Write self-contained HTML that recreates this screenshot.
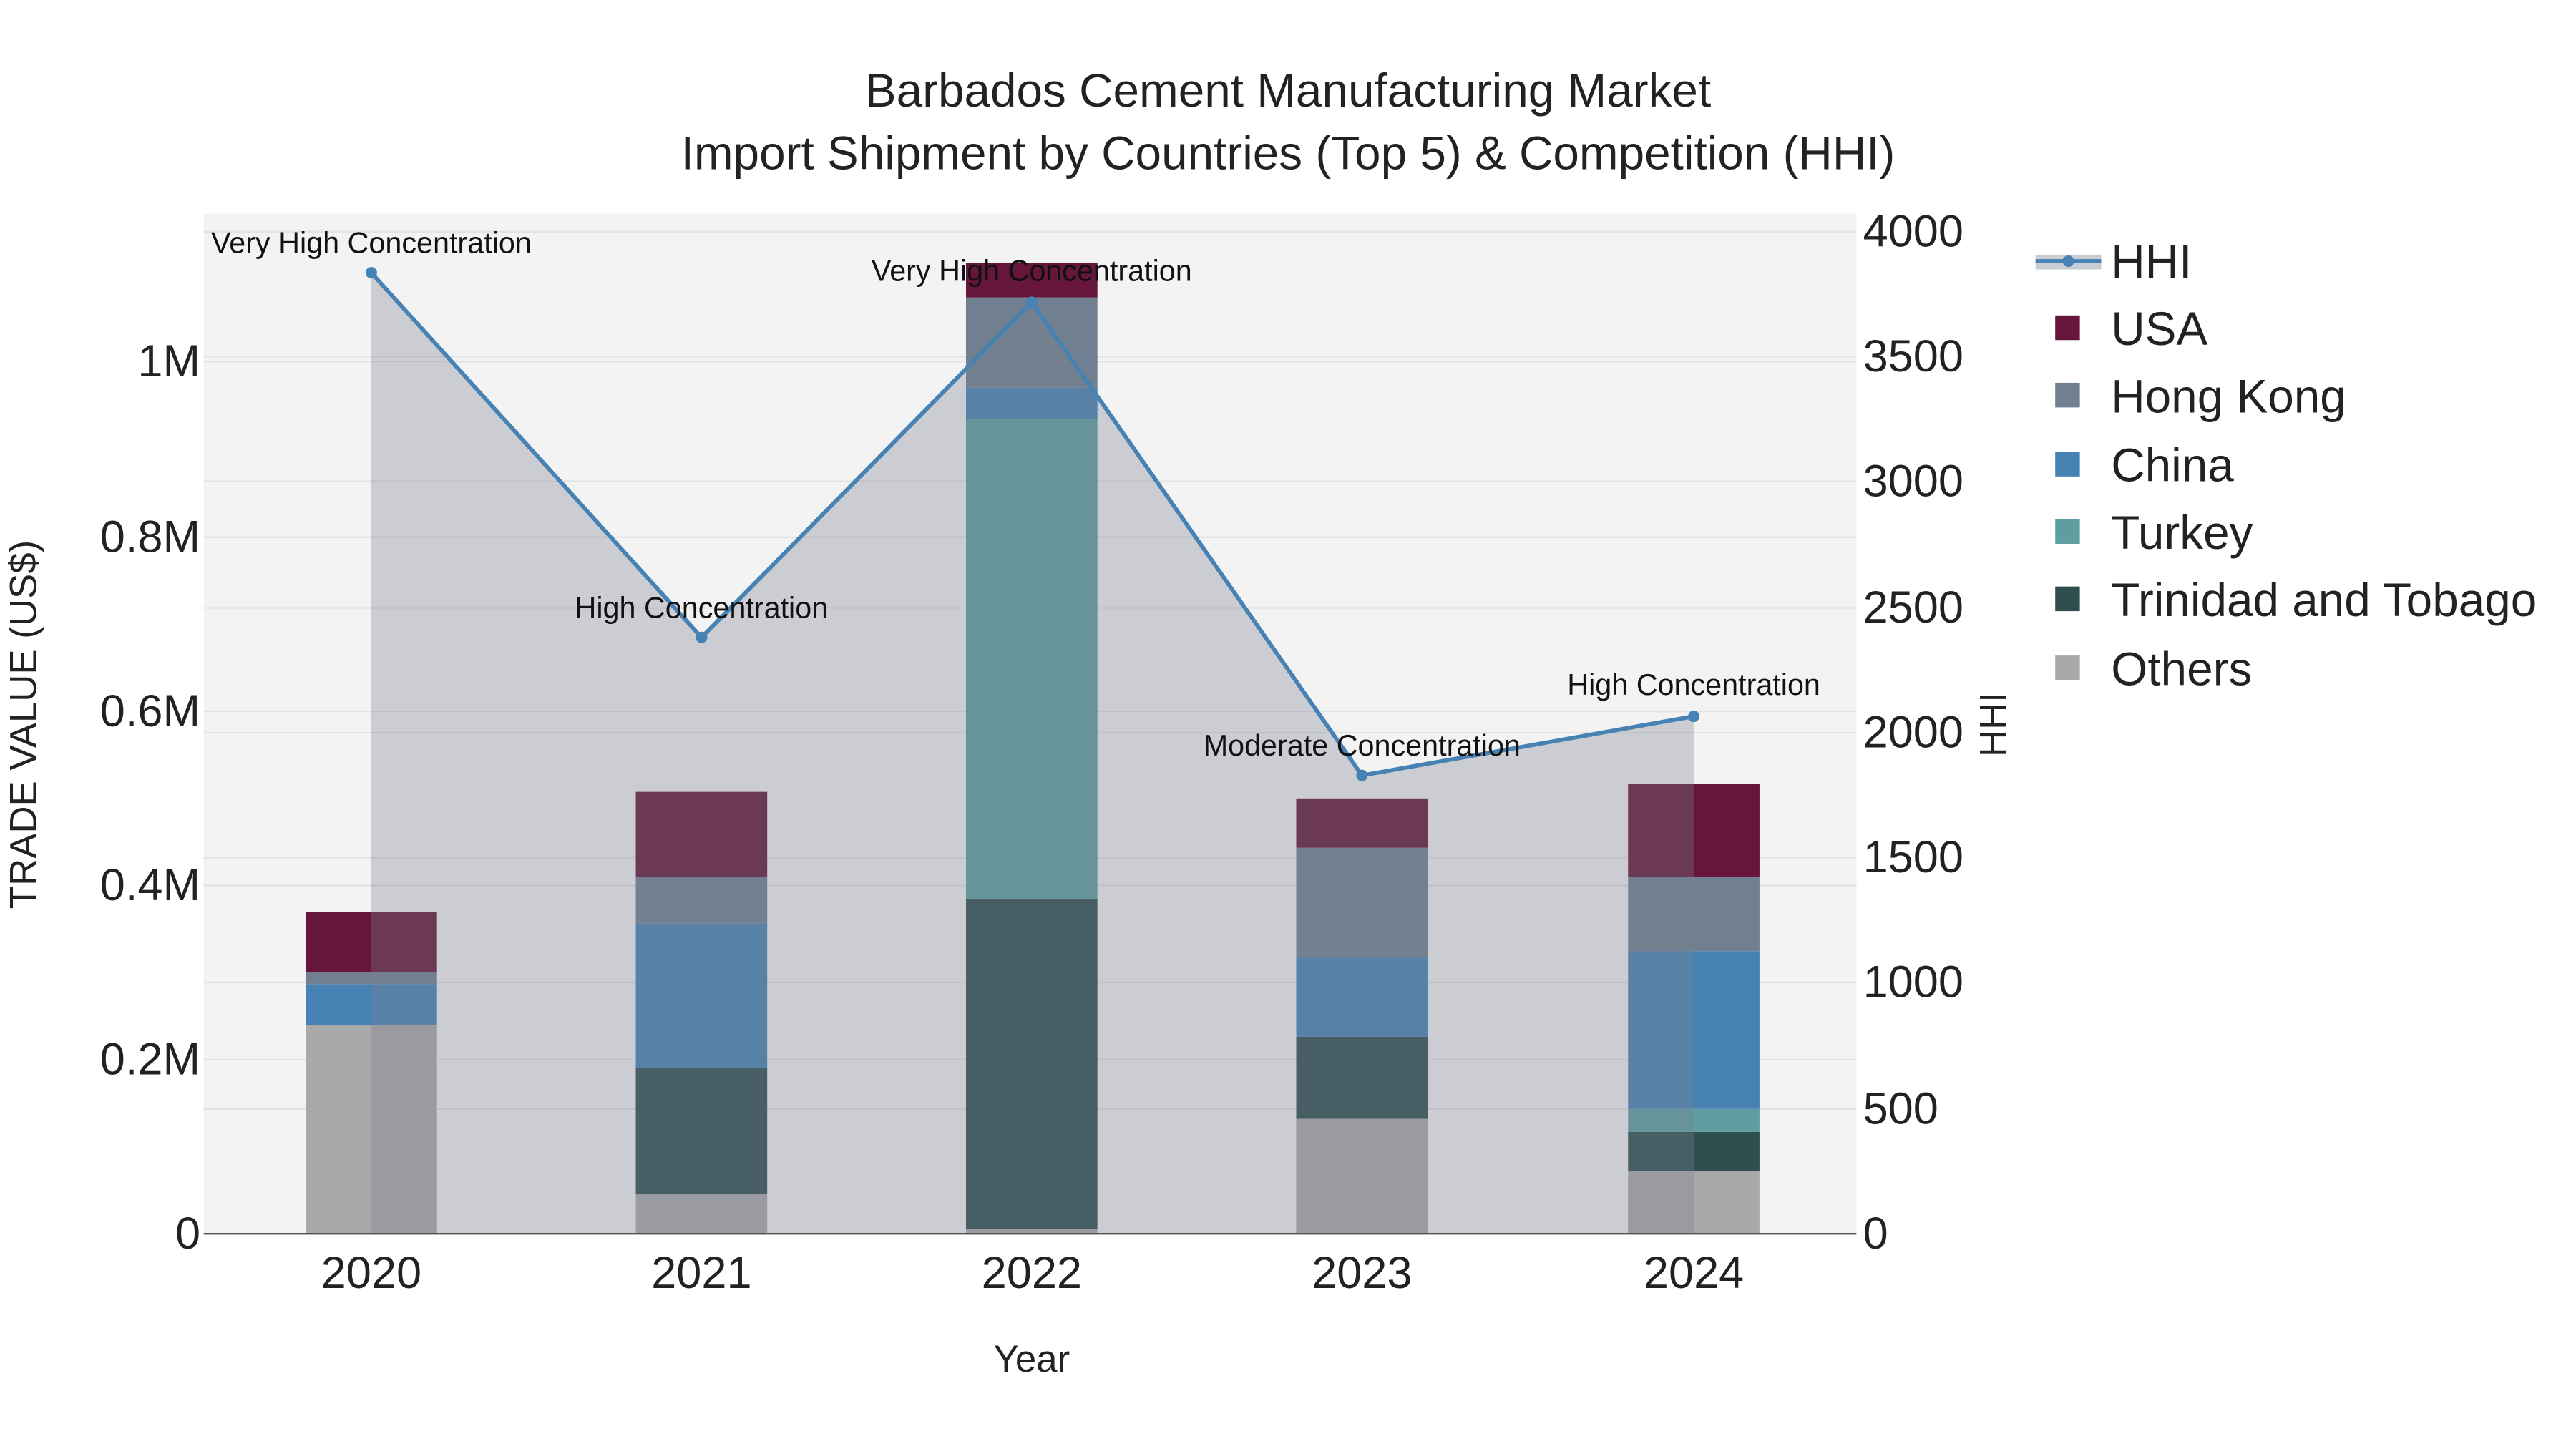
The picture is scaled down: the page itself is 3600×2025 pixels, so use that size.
<!DOCTYPE html>
<html><head><meta charset="utf-8"><style>html,body{margin:0;padding:0;background:#fff}svg{display:block}</style></head>
<body>
<svg width="3600" height="2025" viewBox="0 0 1568 882" xmlns="http://www.w3.org/2000/svg" font-family="Liberation Sans, sans-serif">
<rect width="1568" height="882" fill="#fff"/>
<rect x="124" y="130" width="1006" height="621" fill="#f3f3f3"/>
<g stroke="#e2e2e2" stroke-width="1">
<line x1="124" x2="1130" y1="645" y2="645"/><line x1="124" x2="1130" y1="539" y2="539"/><line x1="124" x2="1130" y1="433" y2="433"/><line x1="124" x2="1130" y1="327" y2="327"/><line x1="124" x2="1130" y1="220" y2="220"/>
<line x1="124" x2="1130" y1="675" y2="675"/><line x1="124" x2="1130" y1="598" y2="598"/><line x1="124" x2="1130" y1="522" y2="522"/><line x1="124" x2="1130" y1="446" y2="446"/><line x1="124" x2="1130" y1="370" y2="370"/><line x1="124" x2="1130" y1="293" y2="293"/><line x1="124" x2="1130" y1="217" y2="217"/><line x1="124" x2="1130" y1="141" y2="141"/>
</g>
<g>
<rect x="186" y="624" width="80" height="127" fill="#a9a9a9"/><rect x="186" y="599" width="80" height="25" fill="#4682b4"/><rect x="186" y="592" width="80" height="7" fill="#708090"/><rect x="186" y="555" width="80" height="37" fill="#65163a"/>
<rect x="387" y="727" width="80" height="24" fill="#a9a9a9"/><rect x="387" y="650" width="80" height="77" fill="#2f4f4f"/><rect x="387" y="562" width="80" height="88" fill="#4682b4"/><rect x="387" y="534" width="80" height="28" fill="#708090"/><rect x="387" y="482" width="80" height="52" fill="#65163a"/>
<rect x="588" y="748" width="80" height="3" fill="#a9a9a9"/><rect x="588" y="547" width="80" height="201" fill="#2f4f4f"/><rect x="588" y="255" width="80" height="292" fill="#5f9ea0"/><rect x="588" y="236" width="80" height="19" fill="#4682b4"/><rect x="588" y="181" width="80" height="55" fill="#708090"/><rect x="588" y="160" width="80" height="21" fill="#65163a"/>
<rect x="789" y="681" width="80" height="70" fill="#a9a9a9"/><rect x="789" y="631" width="80" height="50" fill="#2f4f4f"/><rect x="789" y="583" width="80" height="48" fill="#4682b4"/><rect x="789" y="516" width="80" height="67" fill="#708090"/><rect x="789" y="486" width="80" height="30" fill="#65163a"/>
<rect x="991" y="713" width="80" height="38" fill="#a9a9a9"/><rect x="991" y="689" width="80" height="24" fill="#2f4f4f"/><rect x="991" y="675" width="80" height="14" fill="#5f9ea0"/><rect x="991" y="579" width="80" height="96" fill="#4682b4"/><rect x="991" y="534" width="80" height="45" fill="#708090"/><rect x="991" y="477" width="80" height="57" fill="#65163a"/>
</g>
<polygon points="226,751 226,166 427,388 628,184 829,472 1031,436 1031,751" fill="rgba(120,127,143,0.33)"/>
<polyline points="226,166 427,388 628,184 829,472 1031,436" fill="none" stroke="#4682b4" stroke-width="2.5"/>
<g fill="#4682b4"><circle cx="226" cy="166" r="3.5"/><circle cx="427" cy="388" r="3.5"/><circle cx="628" cy="184" r="3.5"/><circle cx="829" cy="472" r="3.5"/><circle cx="1031" cy="436" r="3.5"/></g>
<line x1="124" x2="1130" y1="751" y2="751" stroke="#444" stroke-width="1"/>
<g font-size="18" fill="#111" text-anchor="middle">
<text x="226" y="154">Very High Concentration</text>
<text x="427" y="376">High Concentration</text>
<text x="628" y="171">Very High Concentration</text>
<text x="829" y="460">Moderate Concentration</text>
<text x="1031" y="423">High Concentration</text>
</g>
<g font-size="28.6" fill="#222" text-anchor="middle">
<text x="784" y="65">Barbados Cement Manufacturing Market</text>
<text x="784" y="103">Import Shipment by Countries (Top 5) &amp; Competition (HHI)</text>
</g>
<g font-size="27.5" fill="#222" text-anchor="middle">
<text x="226" y="784">2020</text><text x="427" y="784">2021</text><text x="628" y="784">2022</text><text x="829" y="784">2023</text><text x="1031" y="784">2024</text>
</g>
<g font-size="27.5" fill="#222" text-anchor="end">
<text x="122" y="760">0</text><text x="122" y="654">0.2M</text><text x="122" y="548">0.4M</text><text x="122" y="442">0.6M</text><text x="122" y="336">0.8M</text><text x="122" y="229">1M</text>
</g>
<g font-size="27.5" fill="#222" text-anchor="start">
<text x="1134" y="760">0</text><text x="1134" y="684">500</text><text x="1134" y="607">1000</text><text x="1134" y="531">1500</text><text x="1134" y="455">2000</text><text x="1134" y="379">2500</text><text x="1134" y="302">3000</text><text x="1134" y="226">3500</text><text x="1134" y="150">4000</text>
</g>
<text x="628" y="835" font-size="23" fill="#222" text-anchor="middle">Year</text>
<text transform="translate(22,441) rotate(-90)" font-size="23" fill="#222" text-anchor="middle">TRADE VALUE (US$)</text>
<text transform="translate(1221,441) rotate(-90)" font-size="23" fill="#222" text-anchor="middle">HHI</text>
<g font-size="28.6" fill="#222">
<rect x="1239" y="155" width="40" height="9" fill="#c8cdd4"/>
<line x1="1239" x2="1279" y1="159" y2="159" stroke="#4682b4" stroke-width="2.5"/><circle cx="1259" cy="159" r="3.5" fill="#4682b4"/>
<text x="1285" y="169">HHI</text>
<rect x="1251" y="192" width="15" height="15" fill="#65163a"/><text x="1285" y="210">USA</text>
<rect x="1251" y="233" width="15" height="15" fill="#708090"/><text x="1285" y="251">Hong Kong</text>
<rect x="1251" y="275" width="15" height="15" fill="#4682b4"/><text x="1285" y="293">China</text>
<rect x="1251" y="316" width="15" height="15" fill="#5f9ea0"/><text x="1285" y="334">Turkey</text>
<rect x="1251" y="357" width="15" height="15" fill="#2f4f4f"/><text x="1285" y="375">Trinidad and Tobago</text>
<rect x="1251" y="399" width="15" height="15" fill="#a9a9a9"/><text x="1285" y="417">Others</text>
</g>
</svg>
</body></html>
